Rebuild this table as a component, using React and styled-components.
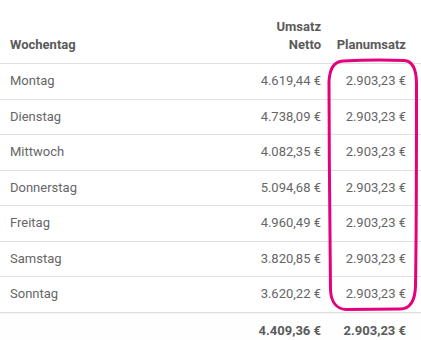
import React from "react";
import styled, { createGlobalStyle } from "styled-components";

const Global = createGlobalStyle`
  html, body { margin: 0; padding: 0; background: #ffffff; }
  body { font-family: Roboto, "Liberation Sans", Arial, sans-serif; }
`;

const Wrap = styled.div`
  position: relative;
  width: 421px;
  height: 340px;
  overflow: hidden;
  background: #fff;
`;

const Row = styled.div`
  display: grid;
  grid-template-columns: 1fr 100px 92px;
  align-items: ${(p) => (p.$head ? "end" : "center")};
  box-sizing: border-box;
  height: ${(p) => p.$h}px;
  padding-bottom: ${(p) => (p.$head ? 9 : 0)}px;
  border-bottom: ${(p) => (p.$noBorder ? "none" : "1px solid #e0e0e0")};
  border-top: ${(p) => (p.$foot ? "1px solid #f4f4f4" : "none")};
  background: ${(p) => (p.$foot ? "#fefefe" : "transparent")};
  font-size: 13px;
  line-height: 18px;
  font-weight: ${(p) => (p.$bold ? 700 : 400)};
  color: ${(p) => (p.$bold ? "#5a5a5a" : "#666666")};
`;

const Cell = styled.div`
  padding: ${(p) =>
    p.$col === 0 ? "0 0 0 10px" : p.$col === 1 ? "0 8px 0 0" : "0 15px 0 0"};
  text-align: ${(p) => (p.$col === 0 ? "left" : "right")};
  white-space: ${(p) => (p.$wrap ? "normal" : "nowrap")};
`;

const Marker = styled.svg`
  position: absolute;
  left: 0;
  top: 0;
  width: 421px;
  height: 340px;
  pointer-events: none;
`;

const rows = [
  ["Montag", "4.619,44 €"],
  ["Dienstag", "4.738,09 €"],
  ["Mittwoch", "4.082,35 €"],
  ["Donnerstag", "5.094,68 €"],
  ["Freitag", "4.960,49 €"],
  ["Samstag", "3.820,85 €"],
  ["Sonntag", "3.620,22 €"],
];

export default function App() {
  return (
    <Wrap>
      <Global />
      <Row $head $bold $h={64}>
        <Cell $col={0}>Wochentag</Cell>
        <Cell $col={1} $wrap>
          Umsatz
          <br />
          Netto
        </Cell>
        <Cell $col={2}>Planumsatz</Cell>
      </Row>
      {rows.map(([day, val]) => (
        <Row key={day} $h={35.5}>
          <Cell $col={0}>{day}</Cell>
          <Cell $col={1}>{val}</Cell>
          <Cell $col={2}>2.903,23 €</Cell>
        </Row>
      ))}
      <Row $foot $bold $noBorder $h={36}>
        <Cell $col={0}></Cell>
        <Cell $col={1}>4.409,36 €</Cell>
        <Cell $col={2}>2.903,23 €</Cell>
      </Row>
      <Marker viewBox="0 0 421 340">
        <path
          d="M 343 61 C 362 60 390 60 404 60.5 C 413 61 416.5 70 416.5 84 C 416.5 150 416.5 230 415.5 286 C 415 302 410 309 400 309 L 346 309.5 C 336 309 331 301 330.5 290 C 330 230 329 150 329 82 C 329.5 69 334 61.5 343 61 Z"
          fill="none"
          stroke="#e5007d"
          strokeWidth="3"
          strokeLinejoin="round"
        />
      </Marker>
    </Wrap>
  );
}
